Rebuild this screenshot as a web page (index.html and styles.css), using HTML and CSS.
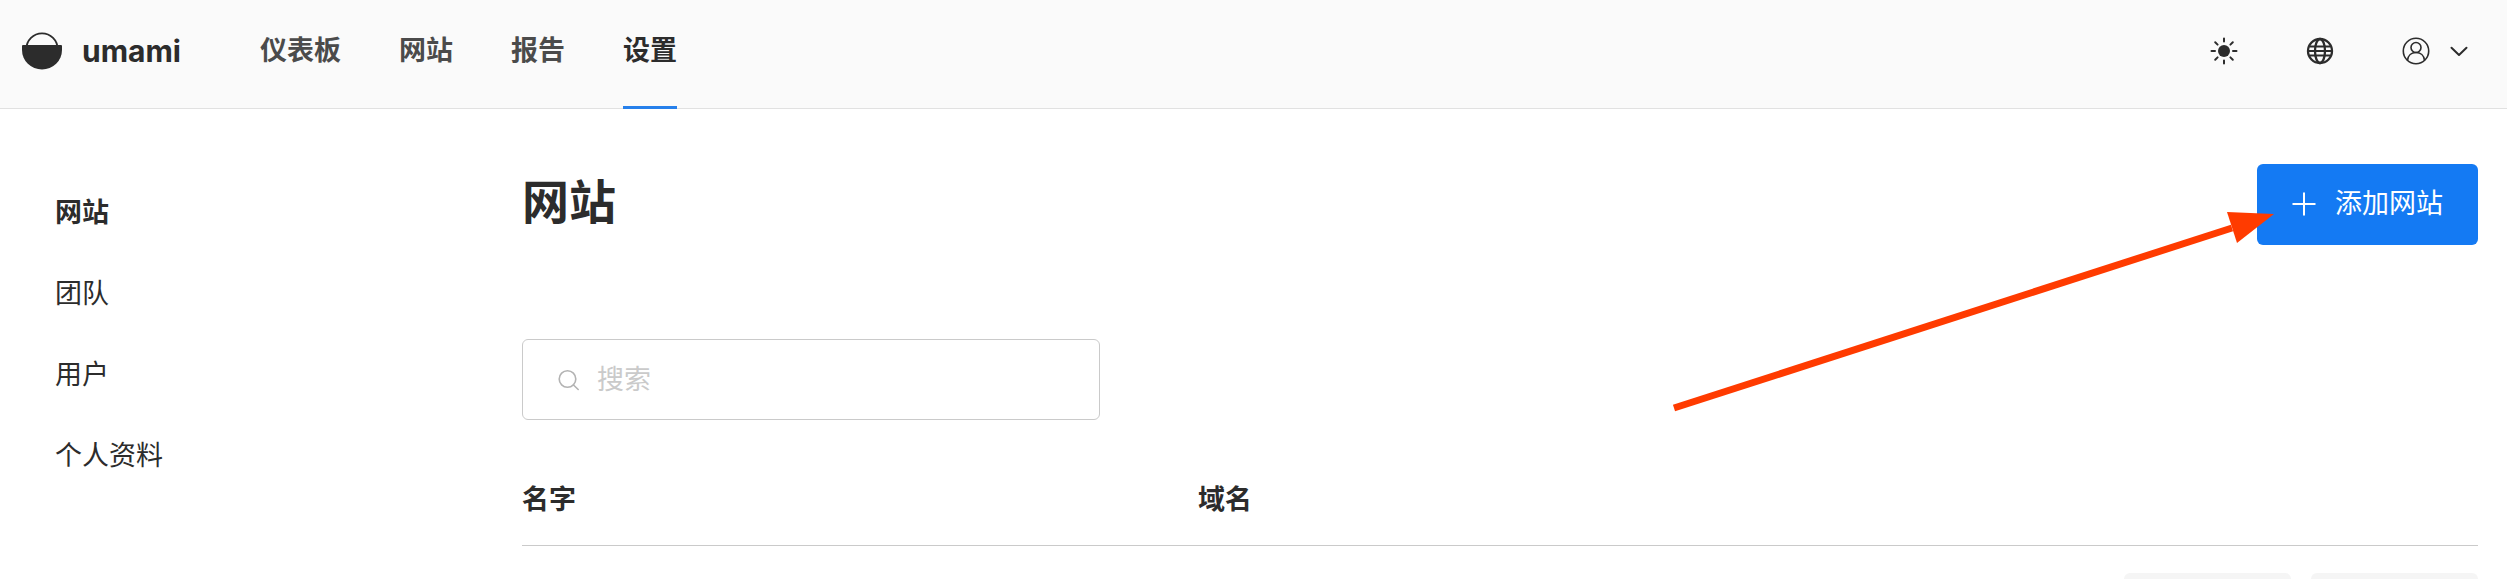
FILE: index.html
```html
<!DOCTYPE html>
<html lang="zh-CN">
<head>
<meta charset="utf-8">
<title>umami</title>
<link rel="stylesheet" href="styles.css">
</head>
<body>
<header class="header">
  <a class="brand" href="#">
    <svg class="logo" viewBox="0 0 40 38" aria-hidden="true">
      <circle cx="20" cy="17" r="15.6" fill="none" stroke="currentColor" stroke-width="1.8"/>
      <path d="M1 13h38q1 0 1 1V18a20 19.500 0 0 1-40 0v-4q0-1 1-1z" fill="currentColor"/>
    </svg>
    <span>umami</span>
  </a>
  <nav class="nav">
    <a href="#">仪表板</a>
    <a href="#">网站</a>
    <a href="#">报告</a>
    <a class="active" href="#">设置</a>
  </nav>
  <div class="tools">
    <button class="tool" type="button" aria-label="主题">
      <svg viewBox="0 0 28 28" aria-hidden="true"><circle cx="14" cy="14" r="6" fill="currentColor"/><path d="M14 1.500v3M14 23.500v3M1.500 14h3.500M23 14h3.500M5.200 5.200l2.400 2.400M20.400 20.400l2.400 2.400M5.200 22.800l2.400-2.400M20.400 7.600l2.400-2.400" stroke="currentColor" stroke-width="2" stroke-linecap="round"/></svg>
    </button>
    <button class="tool" type="button" aria-label="语言">
      <svg viewBox="0 0 28 28" aria-hidden="true" fill="none" stroke="currentColor" stroke-width="2.300"><circle cx="14" cy="14" r="12"/><ellipse cx="14" cy="14" rx="5" ry="12"/><path d="M3.500 9.500h21M2 14h24M3.500 18.500h21" stroke-width="2"/></svg>
    </button>
    <button class="tool" type="button" aria-label="账户">
      <svg viewBox="0 0 28 28" aria-hidden="true" fill="none" stroke="currentColor" stroke-width="1.600"><circle cx="14" cy="14" r="12.700"/><circle cx="14" cy="10.500" r="5"/><path d="M5.500 23.300c.5-5 4-7.800 8.500-7.800s8 2.800 8.500 7.800"/></svg>
      <svg class="chevron" viewBox="0 0 18 18" aria-hidden="true"><path d="M1.500 5.800L9 13l7.500-7.200" fill="none" stroke="currentColor" stroke-width="2" stroke-linecap="round" stroke-linejoin="round"/></svg>
    </button>
  </div>
</header>
<div class="layout">
  <nav class="side">
    <a class="current" href="#">网站</a>
    <a href="#">团队</a>
    <a href="#">用户</a>
    <a href="#">个人资料</a>
  </nav>
  <main class="main">
    <div class="title-row">
      <h1>网站</h1>
      <button class="add" type="button">
        <svg viewBox="0 0 24 24" aria-hidden="true"><path d="M12 .5v23M.5 12h23" stroke="currentColor" stroke-width="2"/></svg>
        <span>添加网站</span>
      </button>
    </div>
    <label class="search">
      <svg viewBox="0 0 22 22" aria-hidden="true" fill="none" stroke="currentColor" stroke-width="1.600" stroke-linecap="round"><circle cx="9.500" cy="10" r="8.300"/><path d="M15.500 16l4.700 4.500"/></svg>
      <input type="text" placeholder="搜索" aria-label="搜索">
    </label>
    <table class="sites">
      <thead><tr><th class="col">名字</th><th class="col">域名</th><th></th></tr></thead>
      <tbody><tr><td></td><td></td><td><div class="actions"><button type="button" aria-label="编辑"></button><button type="button" aria-label="查看"></button></div></td></tr></tbody>
    </table>
  </main>
</div>
<svg class="arrow" viewBox="0 0 602 200" aria-hidden="true"><path d="M2 194L560 14" stroke="#ff3b00" stroke-width="7"/><path d="M555-2l47 2-37 29z" fill="#ff3b00"/></svg>
</body>
</html>
```
FILE: styles.css
```css
* { box-sizing: border-box; }
html { overflow: hidden; }
body {
  position: relative;
  display: flex;
  flex-direction: column;
  height: 100vh;
  margin: 0;
  overflow: hidden;
  background: #fff;
  color: #2c2c2c;
  font: 27px/40px Inter, "Noto Sans CJK SC", sans-serif;
}
a { color: inherit; text-decoration: none; }
button, input { font: inherit; color: inherit; border: 0; padding: 0; background: none; }
svg { display: block; flex: none; }

.header {
  display: flex;
  flex: none;
  height: 109px;
  padding: 0 39px 0 22px;
  background: #fafafa;
  border-bottom: 1px solid #e1e1e1;
}
.brand {
  display: flex;
  align-items: center;
  gap: 20px;
  width: 238px;
  height: 102px;
  font-size: 30px;
  font-weight: 700;
}
.logo { width: 40px; height: 38px; }
.nav { display: flex; gap: 58px; font-weight: 700; color: #4b4b4b; }
.nav a { height: 109px; padding-top: 31px; }
.nav .active { color: #2c2c2c; border-bottom: 3px solid #2680eb; }
.tools { display: flex; align-items: center; gap: 68px; height: 101px; margin-left: auto; }
.tool { display: flex; align-items: center; gap: 20px; }
.tool svg { width: 28px; height: 28px; }
.tool .chevron { width: 18px; height: 18px; }

.layout { display: flex; flex: 1; min-height: 0; overflow: hidden; padding: 55px 29px 0 55px; }
.side { display: flex; flex-direction: column; gap: 41px; width: 467px; padding-top: 29px; flex: none; }
.side .current { font-weight: 700; }
.main { flex: 1; }
.title-row { display: flex; justify-content: space-between; align-items: flex-start; }
h1 { margin: 8px 0 0; font-size: 47px; line-height: 60px; }
.add {
  display: flex;
  align-items: center;
  gap: 19px;
  padding: 20px 35px 21px;
  border-radius: 6px;
  background: #147af3;
  color: #fff;
}
.add svg { width: 24px; height: 24px; }
.search {
  display: flex;
  align-items: center;
  gap: 17px;
  width: 578px;
  max-width: 100%;
  height: 81px;
  margin-top: 94px;
  padding: 0 35px;
  border: 1px solid #cacaca;
  border-radius: 6px;
  color: #b3b3b3;
}
.search svg { width: 22px; height: 22px; }
.search input { flex: 1; min-width: 0; height: 40px; color: #2c2c2c; outline: 0; }
.search input::placeholder { color: #cacaca; opacity: 1; }

.sites { width: 100%; margin-top: 60px; border-collapse: collapse; table-layout: fixed; }
.sites th { height: 65px; padding: 0 0 24px; text-align: left; font-weight: 700; border-bottom: 1px solid #cacaca; }
.sites .col { width: 676px; }
.sites td { padding: 27px 0 0; }
.actions { display: flex; justify-content: flex-end; gap: 20px; }
.actions button { width: 167px; height: 81px; border-radius: 6px; background: #f5f5f5; }

.arrow { position: absolute; top: 214px; right: 233px; width: 602px; height: 200px; overflow: visible; }
```
